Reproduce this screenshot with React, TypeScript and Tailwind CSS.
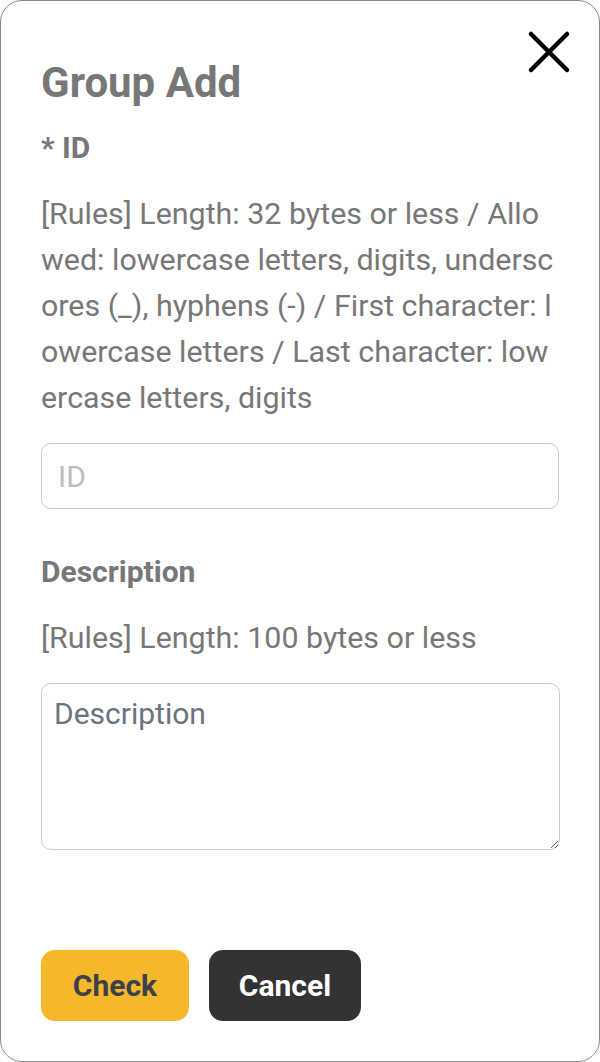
import React from "react";

const CloseIcon = () => (
  <svg width="44" height="44" viewBox="0 0 44 44" fill="none" stroke="#000" strokeWidth="4.5" strokeLinecap="round">
    <path d="M4 4 L40 40 M40 4 L4 40" />
  </svg>
);

export default function App() {
  return (
    <div className="h-[1062px] w-[600px] bg-white font-['Roboto',sans-serif]">
      <div className="relative flex h-full flex-col rounded-[22px] border border-[#8a8a8a] px-10 pb-10 pt-[58px]">
        <button className="absolute right-[28px] top-[29px]">
          <CloseIcon />
        </button>

        <h1 className="text-[42px] font-bold leading-[48px] text-[#777]">Group Add</h1>

        {/* ID field */}
        <label className="mt-[23px] text-[30px] font-bold leading-[36px] text-[#777]">* ID</label>
        <p className="mt-[25px] break-all pr-[3px] text-[30.4px] leading-[46px] text-[#777]">
          [Rules] Length: 32 bytes or less / Allowed: lowercase letters, digits, underscores (_), hyphens (-) / First character: lowercase letters / Last character: lowercase letters, digits
        </p>
        <input
          placeholder="ID"
          className="mt-[22px] h-[66px] w-full rounded-[10px] border border-[#ccc] px-4 text-[30px] text-[#555] outline-none placeholder:text-[#bdbdbd]"
        />

        {/* Description field */}
        <label className="mt-[45px] text-[30px] font-bold leading-[36px] text-[#777]">Description</label>
        <p className="mt-[30px] text-[30.4px] leading-[36px] text-[#777]">[Rules] Length: 100 bytes or less</p>
        <textarea
          placeholder="Description"
          className="mt-[27px] h-[167px] w-[519px] rounded-[10px] border border-[#ccc] px-3 py-3 text-[30px] leading-[36px] text-[#555] outline-none placeholder:text-[#6b7280]"
        />

        <div className="mt-auto flex gap-5">
          <button className="h-[71px] w-[148px] rounded-[14px] bg-[#f5b82a] text-[30px] font-bold text-[#3b404d]">Check</button>
          <button className="h-[71px] w-[152px] rounded-[14px] bg-[#333] text-[30px] font-bold text-white">Cancel</button>
        </div>
      </div>
    </div>
  );
}
